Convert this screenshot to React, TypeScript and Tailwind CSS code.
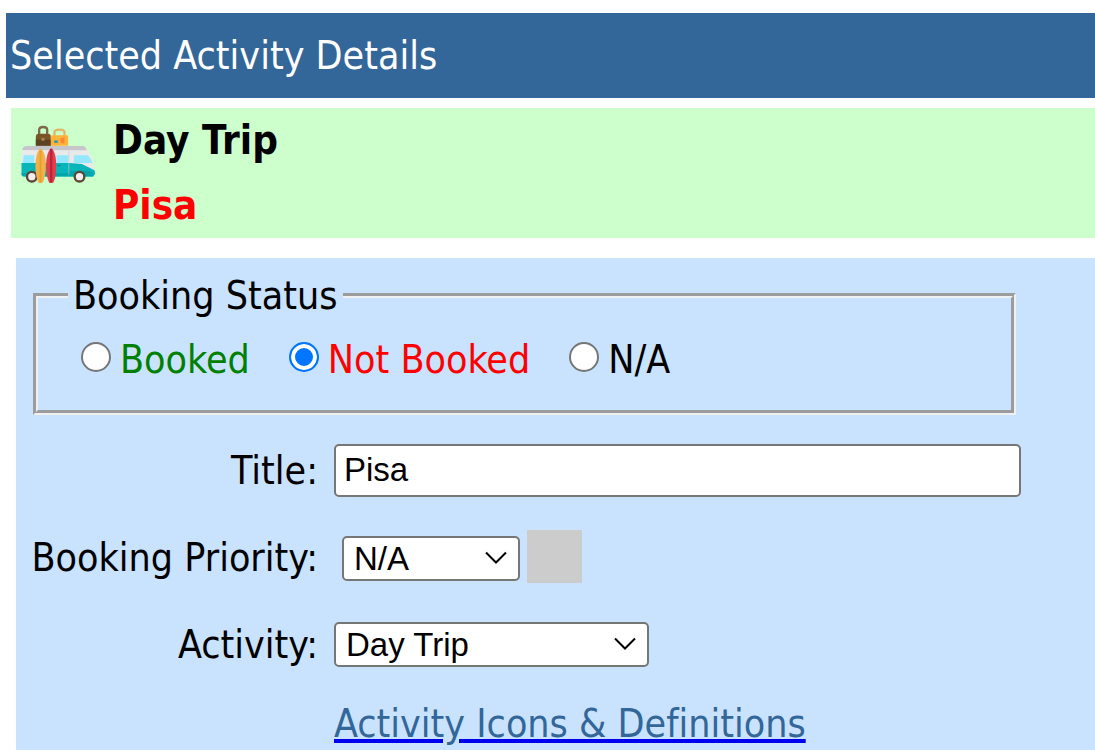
import type { ReactNode } from "react";

const fieldText = "font-['Liberation_Sans',Arial,sans-serif] text-[33px] text-black";

function VanIcon() {
  return (
    <svg viewBox="60 40 230 180" className="h-[60px] w-[77px] shrink-0" aria-hidden="true">
      <path d="M117 72V58q0-9 12-9t12 9v14" fill="none" stroke="#7d6a48" strokeWidth="7" />
      <path d="M163 76V65q0-8 15-8t15 8v11" fill="none" stroke="#e2b565" strokeWidth="7" />
      <path d="M107 78q0-9 9-9h27q9 0 9 9v27h-45z" fill="#7a5427" />
      <path d="M107 87h45v18h-45z" fill="#5d4123" />
      <rect x="124" y="82" width="9" height="8" fill="#a98652" />
      <path d="M152 77q0-3 4-3h45q3 0 3 3v28h-52z" fill="#ffb33b" />
      <rect x="162" y="89" width="11" height="8" fill="#3d9ba1" />
      <path d="M181 83l12-3v18h-12z" fill="#ff8736" />
      <path d="M65 126q3-12 12-15h180q13 15 22 45l5 25q3 14-8 15H72q-8 0-8-8z" fill="#e9e9ea" />
      <path d="M66 118q3-12 12-12h169q9 0 13 13z" fill="#c5c5ca" />
      <path d="M71 134h31v23H68zM169 134h35v23h-35zM221 134h42q8 9 14 23h-56z" fill="#94e8ff" />
      <path d="M64 157h143l38 3 38 19 2 10-6 9H72q-8 0-8-8z" fill="#08b5b8" />
      <path d="M64 188h140v-8h65l10 8-1 8H72q-8 0-8-8z" fill="#00a4ab" />
      <path d="M206 120v72" stroke="#b8cfd2" strokeWidth="2" />
      <path d="M171 165h10" stroke="#087e86" strokeWidth="3" />
      <circle cx="95" cy="198" r="18" fill="#5b4534" />
      <circle cx="95" cy="198" r="11" fill="#f0eeee" />
      <circle cx="238" cy="198" r="18" fill="#5b4534" />
      <circle cx="238" cy="198" r="11" fill="#f0eeee" />
      <path d="M121 113c-10 9-15 28-15 52 0 23 4 42 9 51h12c6-9 10-28 10-51 0-24-5-43-16-52z" fill="#f4b044" />
      <path d="M121 120v96" stroke="#e2a03a" strokeWidth="6" />
      <path d="M153 112c-10 9-15 28-15 52 0 24 4 43 9 52h12c6-9 9-28 9-52 0-24-4-43-15-52z" fill="#e63c48" />
      <path d="M153 115v101" stroke="#b3263d" strokeWidth="7" />
    </svg>
  );
}

function StatusOption({ id, color, checked, children }: { id: string; color: string; checked?: boolean; children: ReactNode }) {
  return (
    <div className="flex items-center gap-[9px]">
      <input
        id={id}
        type="radio"
        name="booking-status"
        defaultChecked={checked}
        className="mb-1.5 size-[30px] shrink-0 appearance-none rounded-full border-2 border-[#767676] bg-white checked:border-[#0075ff] checked:bg-[#0075ff] checked:shadow-[inset_0_0_0_4px_white]"
      />
      <label htmlFor={id} className={color}>{children}</label>
    </div>
  );
}

function Dropdown({ id, width, options }: { id: string; width: string; options: string[] }) {
  return (
    <div className={`relative ${width}`}>
      <select
        id={id}
        className={`block h-[45px] w-full appearance-none rounded-[5px] border-2 border-[#767676] bg-white pl-2.5 leading-[41px] ${fieldText}`}
      >
        {options.map((option) => (
          <option key={option}>{option}</option>
        ))}
      </select>
      <svg viewBox="0 0 22 13" className="pointer-events-none absolute top-[15px] right-[13px] h-[13px] w-[22px]" aria-hidden="true">
        <path d="M1 1.5L11 11.5L21 1.5" fill="none" stroke="black" strokeWidth="2" />
      </svg>
    </div>
  );
}

function Row({ id, label, children }: { id: string; label: string; children: ReactNode }) {
  return (
    <div className="grid min-h-[54px] grid-cols-[302px_minmax(0,1fr)] items-center gap-4">
      <label htmlFor={id} className="text-right whitespace-nowrap">{label}</label>
      {children}
    </div>
  );
}

export default function App() {
  return (
    <main className="bg-white pt-[13px] font-['DejaVu_Sans_Condensed','DejaVu_Sans',sans-serif] text-[39px] leading-[47px] text-black [font-variant-ligatures:none]">
      <h1 className="ml-1.5 bg-[#336699] py-[19px] pl-1 text-white">Selected Activity Details</h1>

      <section className="mt-2.5 ml-[11px] flex gap-4 bg-[#ccffcc] pl-[9px] text-[40px] leading-[65px] font-bold">
        <div className="pt-4">
          <VanIcon />
        </div>
        <div>
          <h2>Day Trip</h2>
          <p className="text-[#ff0000]">Pisa</p>
        </div>
      </section>

      <form className="mt-5 ml-4 bg-[#c9e3ff] pt-3.5 pb-2">
        <fieldset className="ml-[17px] w-[983px] max-w-full border-[5px] border-[#f0f0f0] pb-[27px] pl-[43px] [border-style:groove]">
          <legend className="-ml-[13px] px-[5px]">Booking Status</legend>
          <div className="flex gap-[39px] pt-[17px]">
            <StatusOption id="booked" color="text-[#008000]">Booked</StatusOption>
            <StatusOption id="not-booked" color="text-[#ff0000]" checked>Not Booked</StatusOption>
            <StatusOption id="not-applicable" color="text-black">N/A</StatusOption>
          </div>
        </fieldset>

        <div className="mt-7 flex flex-col gap-[33px]">
          <Row id="title" label="Title:">
            <input
              id="title"
              type="text"
              defaultValue="Pisa"
              className={`h-[53px] w-[687px] max-w-full rounded-[5px] border-2 border-[#767676] bg-white px-2 ${fieldText}`}
            />
          </Row>
          <Row id="priority" label="Booking Priority:">
            <div className="flex items-end gap-[7px] pb-[3px] pl-2">
              <Dropdown id="priority" width="w-[178px]" options={["N/A", "Low", "Medium", "High"]} />
              <span className="mb-[-2px] h-[53px] w-[55px] bg-[#cccccc]" />
            </div>
          </Row>
          <Row id="activity" label="Activity:">
            <Dropdown id="activity" width="w-[315px]" options={["Day Trip"]} />
          </Row>
          <div className="pl-[318px] leading-[39px]">
            <a href="#activity-icons" className="text-[#336699] underline decoration-[#0000ee] decoration-4">
              Activity Icons &amp; Definitions
            </a>
          </div>
        </div>
      </form>
    </main>
  );
}
